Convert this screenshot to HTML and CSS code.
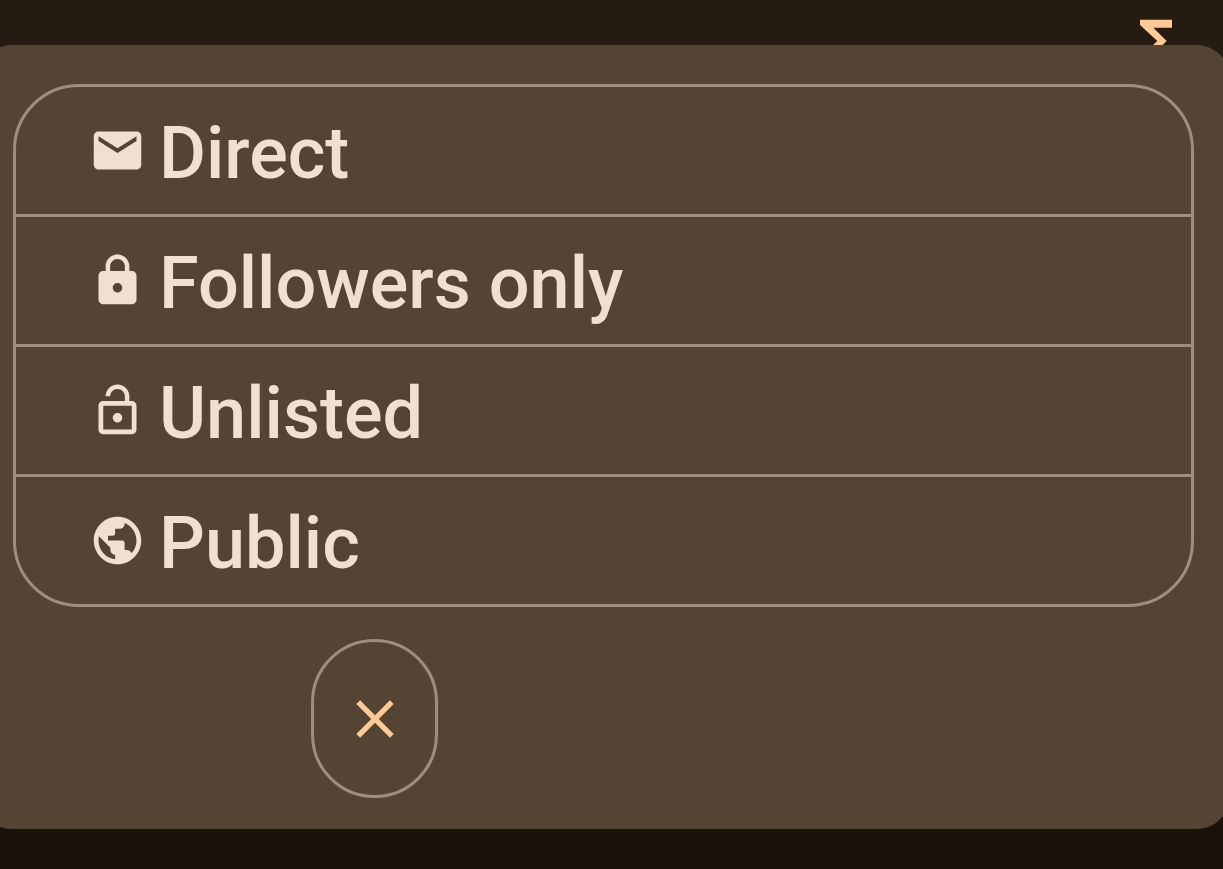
FILE: index.html
```html
<!DOCTYPE html>
<html lang="en">
<head>
  <meta charset="UTF-8" />
  <meta name="viewport" content="width=device-width, initial-scale=1.0"/>
  <title>Post visibility</title>
  <link rel="stylesheet" href="styles.css">
</head>
<body>
  <!-- Toolbar -->
  <header class="toolbar">
    <button class="tool-button" type="button" aria-label="Insert formula">
      <svg class="tool-icon" viewBox="0 0 24 24"><path d="M18 4H6v2l6.5 6L6 18v2h12v-3h-7l5-5-5-5h7z"/></svg>
    </button>
  </header>

  <!-- Visibility menu -->
  <main class="panel">
    <div class="options">
      <button class="option" type="button">
        <svg class="option-icon" viewBox="0 0 24 24"><path d="M20 4H4c-1.1 0-1.99.9-1.99 2L2 18c0 1.1.9 2 2 2h16c1.1 0 2-.9 2-2V6c0-1.1-.9-2-2-2zm0 4l-8 5-8-5V6l8 5 8-5v2z"/></svg>
        <span>Direct</span>
      </button>
      <button class="option" type="button">
        <svg class="option-icon" viewBox="0 0 24 24"><path d="M18 8h-1V6c0-2.76-2.24-5-5-5S7 3.24 7 6v2H6c-1.1 0-2 .9-2 2v10c0 1.1.9 2 2 2h12c1.1 0 2-.9 2-2V10c0-1.1-.9-2-2-2zm-6 9c-1.1 0-2-.9-2-2s.9-2 2-2 2 .9 2 2-.9 2-2 2zm3.1-9H8.9V6c0-1.71 1.39-3.1 3.1-3.1 1.71 0 3.1 1.39 3.1 3.1v2z"/></svg>
        <span>Followers only</span>
      </button>
      <button class="option" type="button">
        <svg class="option-icon" viewBox="0 0 24 24"><path d="M12 17c1.1 0 2-.9 2-2s-.9-2-2-2-2 .9-2 2 .9 2 2 2zm6-9h-1V6c0-2.76-2.24-5-5-5S7 3.24 7 6h1.9c0-1.71 1.39-3.1 3.1-3.1 1.71 0 3.1 1.39 3.1 3.1v2H6c-1.1 0-2 .9-2 2v10c0 1.1.9 2 2 2h12c1.1 0 2-.9 2-2V10c0-1.1-.9-2-2-2zm0 12H6V10h12v10z"/></svg>
        <span>Unlisted</span>
      </button>
      <button class="option" type="button">
        <svg class="option-icon" viewBox="0 0 24 24"><path d="M12 2C6.48 2 2 6.48 2 12s4.48 10 10 10 10-4.48 10-10S17.52 2 12 2zm-1 17.93c-3.95-.49-7-3.85-7-7.93 0-.62.08-1.21.21-1.79L9 15v1c0 1.1.9 2 2 2v1.93zm6.9-2.54c-.26-.81-1-1.39-1.9-1.39h-1v-3c0-.55-.45-1-1-1H8v-2h2c.55 0 1-.45 1-1V7h2c1.1 0 2-.9 2-2v-.41c2.93 1.19 5 4.06 5 7.41 0 2.08-.8 3.97-2.1 5.39z"/></svg>
        <span>Public</span>
      </button>
    </div>

    <div class="actions">
      <button class="close-button" type="button" aria-label="Close">
        <svg class="close-icon" viewBox="0 0 24 24"><path d="M19 6.41L17.59 5 12 10.59 6.41 5 5 6.41 10.59 12 5 17.59 6.41 19 12 13.41 17.59 19 19 17.59 13.41 12z"/></svg>
      </button>
    </div>
  </main>
</body>
</html>
```
FILE: styles.css
```css
* {
  box-sizing: border-box;
}

body {
  margin: 0;
  overflow: hidden;
  background: #1a110b;
  color: #f1dfd1;
  font-family: Roboto, sans-serif;
}

button {
  margin: 0;
  padding: 0;
  border: none;
  background: none;
  color: inherit;
  font: inherit;
  cursor: pointer;
}

svg {
  display: block;
  flex: none;
  fill: currentColor;
}

/* the panel covers the lower half of the toolbar */
.toolbar {
  display: flex;
  justify-content: flex-end;
  height: 84px;
  padding: 9px 35px 0 0;
  background: #261b11;
  color: #ffca98;
}

.tool-button {
  height: 64px;
}

.tool-icon,
.close-icon {
  width: 64px;
  height: 64px;
}

/* runs past both sides of the window */
.panel {
  position: relative;
  margin: -39px -6px 0 -20px;
  padding: 39px 35px 31px 33px;
  border-radius: 32px;
  background: #544434;
}

.options {
  display: flex;
  flex-direction: column;
  overflow: hidden;
  border: 3px solid #a08d7d;
  border-radius: 66px;
}

.option {
  display: flex;
  align-items: center;
  gap: 13px;
  height: 127px;
  padding: 0 73px;
  font-size: 72px;
  font-weight: 500;
  line-height: 84px;
  text-align: left;
}

.option + .option {
  height: 130px;
  border-top: 3px solid #a08d7d;
}

.option-icon {
  width: 57px;
  height: 57px;
}

.option span {
  padding-top: 7px;
}

.actions {
  display: flex;
  margin-top: 32px;
  padding-left: 298px;
}

.close-button {
  display: flex;
  align-items: center;
  justify-content: center;
  width: 127px;
  height: 159px;
  border: 3px solid #a08d7d;
  border-radius: 64px;
  color: #ffca98;
}
```
